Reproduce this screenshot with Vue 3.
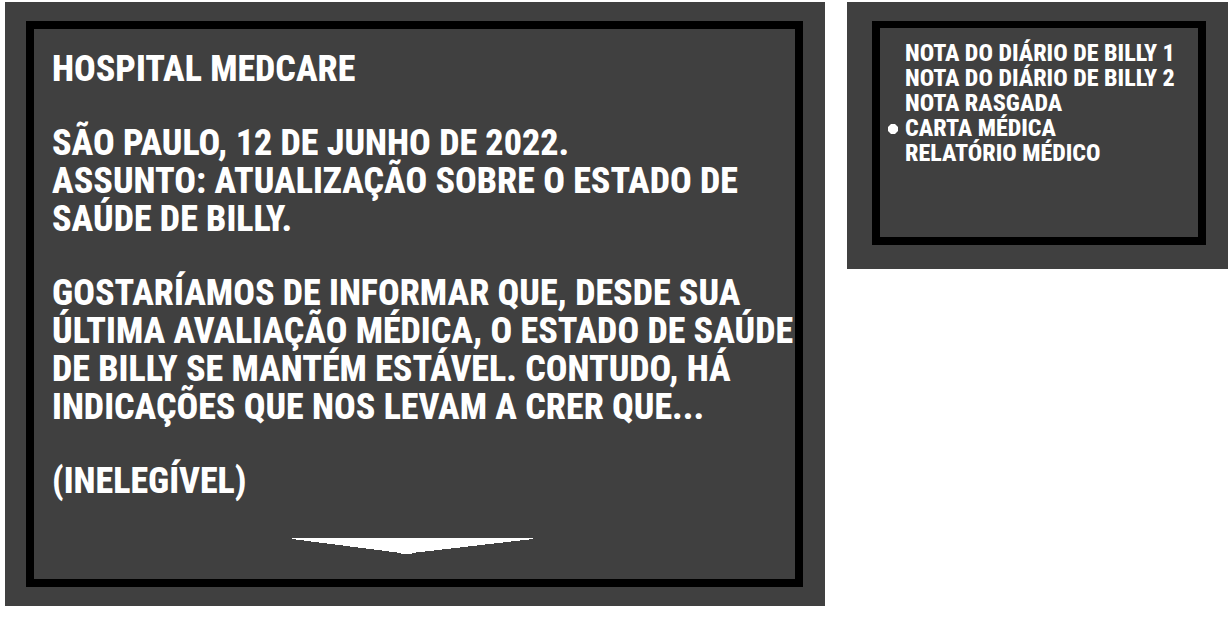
<script setup>
const paragraphs = [
  ['HOSPITAL MEDCARE'],
  ['SÃO PAULO, 12 DE JUNHO DE 2022.', 'ASSUNTO: ATUALIZAÇÃO SOBRE O ESTADO DE', 'SAÚDE DE BILLY.'],
  ['GOSTARÍAMOS DE INFORMAR QUE, DESDE SUA', 'ÚLTIMA AVALIAÇÃO MÉDICA, O ESTADO DE SAÚDE', 'DE BILLY SE MANTÉM ESTÁVEL. CONTUDO, HÁ', 'INDICAÇÕES QUE NOS LEVAM A CRER QUE...'],
  ['(INELEGÍVEL)'],
]
const notes = [
  'NOTA DO DIÁRIO DE BILLY 1',
  'NOTA DO DIÁRIO DE BILLY 2',
  'NOTA RASGADA',
  'CARTA MÉDICA',
  'RELATÓRIO MÉDICO',
]
const selected = 3
</script>

<template>
  <main class="page">
    <section class="panel letter">
      <article class="frame letter-frame">
        <component :is="i === 0 ? 'h1' : 'p'" v-for="(lines, i) in paragraphs" :key="i" class="para">
          <span v-for="line in lines" :key="line" class="line">{{ line }}</span>
        </component>
        <button class="more" type="button" aria-label="Continuar">
          <svg width="241" height="16" viewBox="0 0 241 16" shape-rendering="crispEdges">
            <path d="M0 0H241V1L120 15V16H109V15L0 1Z" fill="#fff" />
          </svg>
        </button>
      </article>
    </section>
    <nav class="panel menu">
      <ul class="frame menu-frame">
        <li v-for="(note, i) in notes" :key="note" class="item">
          <svg class="dot" width="10" height="10" viewBox="0 0 10 10">
            <path v-if="i === selected" d="M3 0H7L10 3V7L7 10H3L0 7V3Z" fill="#fff" />
          </svg>
          <button type="button" class="note">{{ note }}</button>
        </li>
      </ul>
    </nav>
  </main>
</template>

<style>
body {
  background: #fff;
}
</style>

<style scoped>
.page {
  display: grid;
  grid-template-columns: minmax(0, 820fr) minmax(0, 381fr);
  column-gap: 22px;
  align-items: start;
  padding: 2px 0 0 5px;
  font-family: "Roboto Condensed", "Liberation Sans Narrow", Roboto, sans-serif;
  font-weight: 800;
  color: #fff;
}
.panel {
  background: #404040;
  box-sizing: border-box;
}
.letter {
  padding: 19px 22px 19px 21px;
}
.menu {
  padding: 19px 22px 24px 25px;
}
.frame {
  margin: 0;
  box-sizing: border-box;
  border: 8px solid #000;
}
.letter-frame {
  display: flex;
  flex-direction: column;
  padding: 21px 0 25px 18px;
}
.para {
  margin: 0 0 36px;
  font-size: 36px;
  line-height: 38px;
  font-weight: 800;
}
.line {
  display: block;
  white-space: nowrap;
}
button {
  font: inherit;
  color: inherit;
  background: none;
  border: 0;
  padding: 0;
  cursor: pointer;
}
.more {
  align-self: center;
  display: flex;
  margin: 2px 22px 0 0;
}
.menu-frame {
  list-style: none;
  min-height: 224px;
  border-top-width: 7px;
  padding: 13px 8px;
}
.item {
  display: flex;
  align-items: center;
  gap: 7px;
  height: 25px;
}
.note {
  font-size: 24px;
  line-height: 25px;
  white-space: nowrap;
}
</style>
